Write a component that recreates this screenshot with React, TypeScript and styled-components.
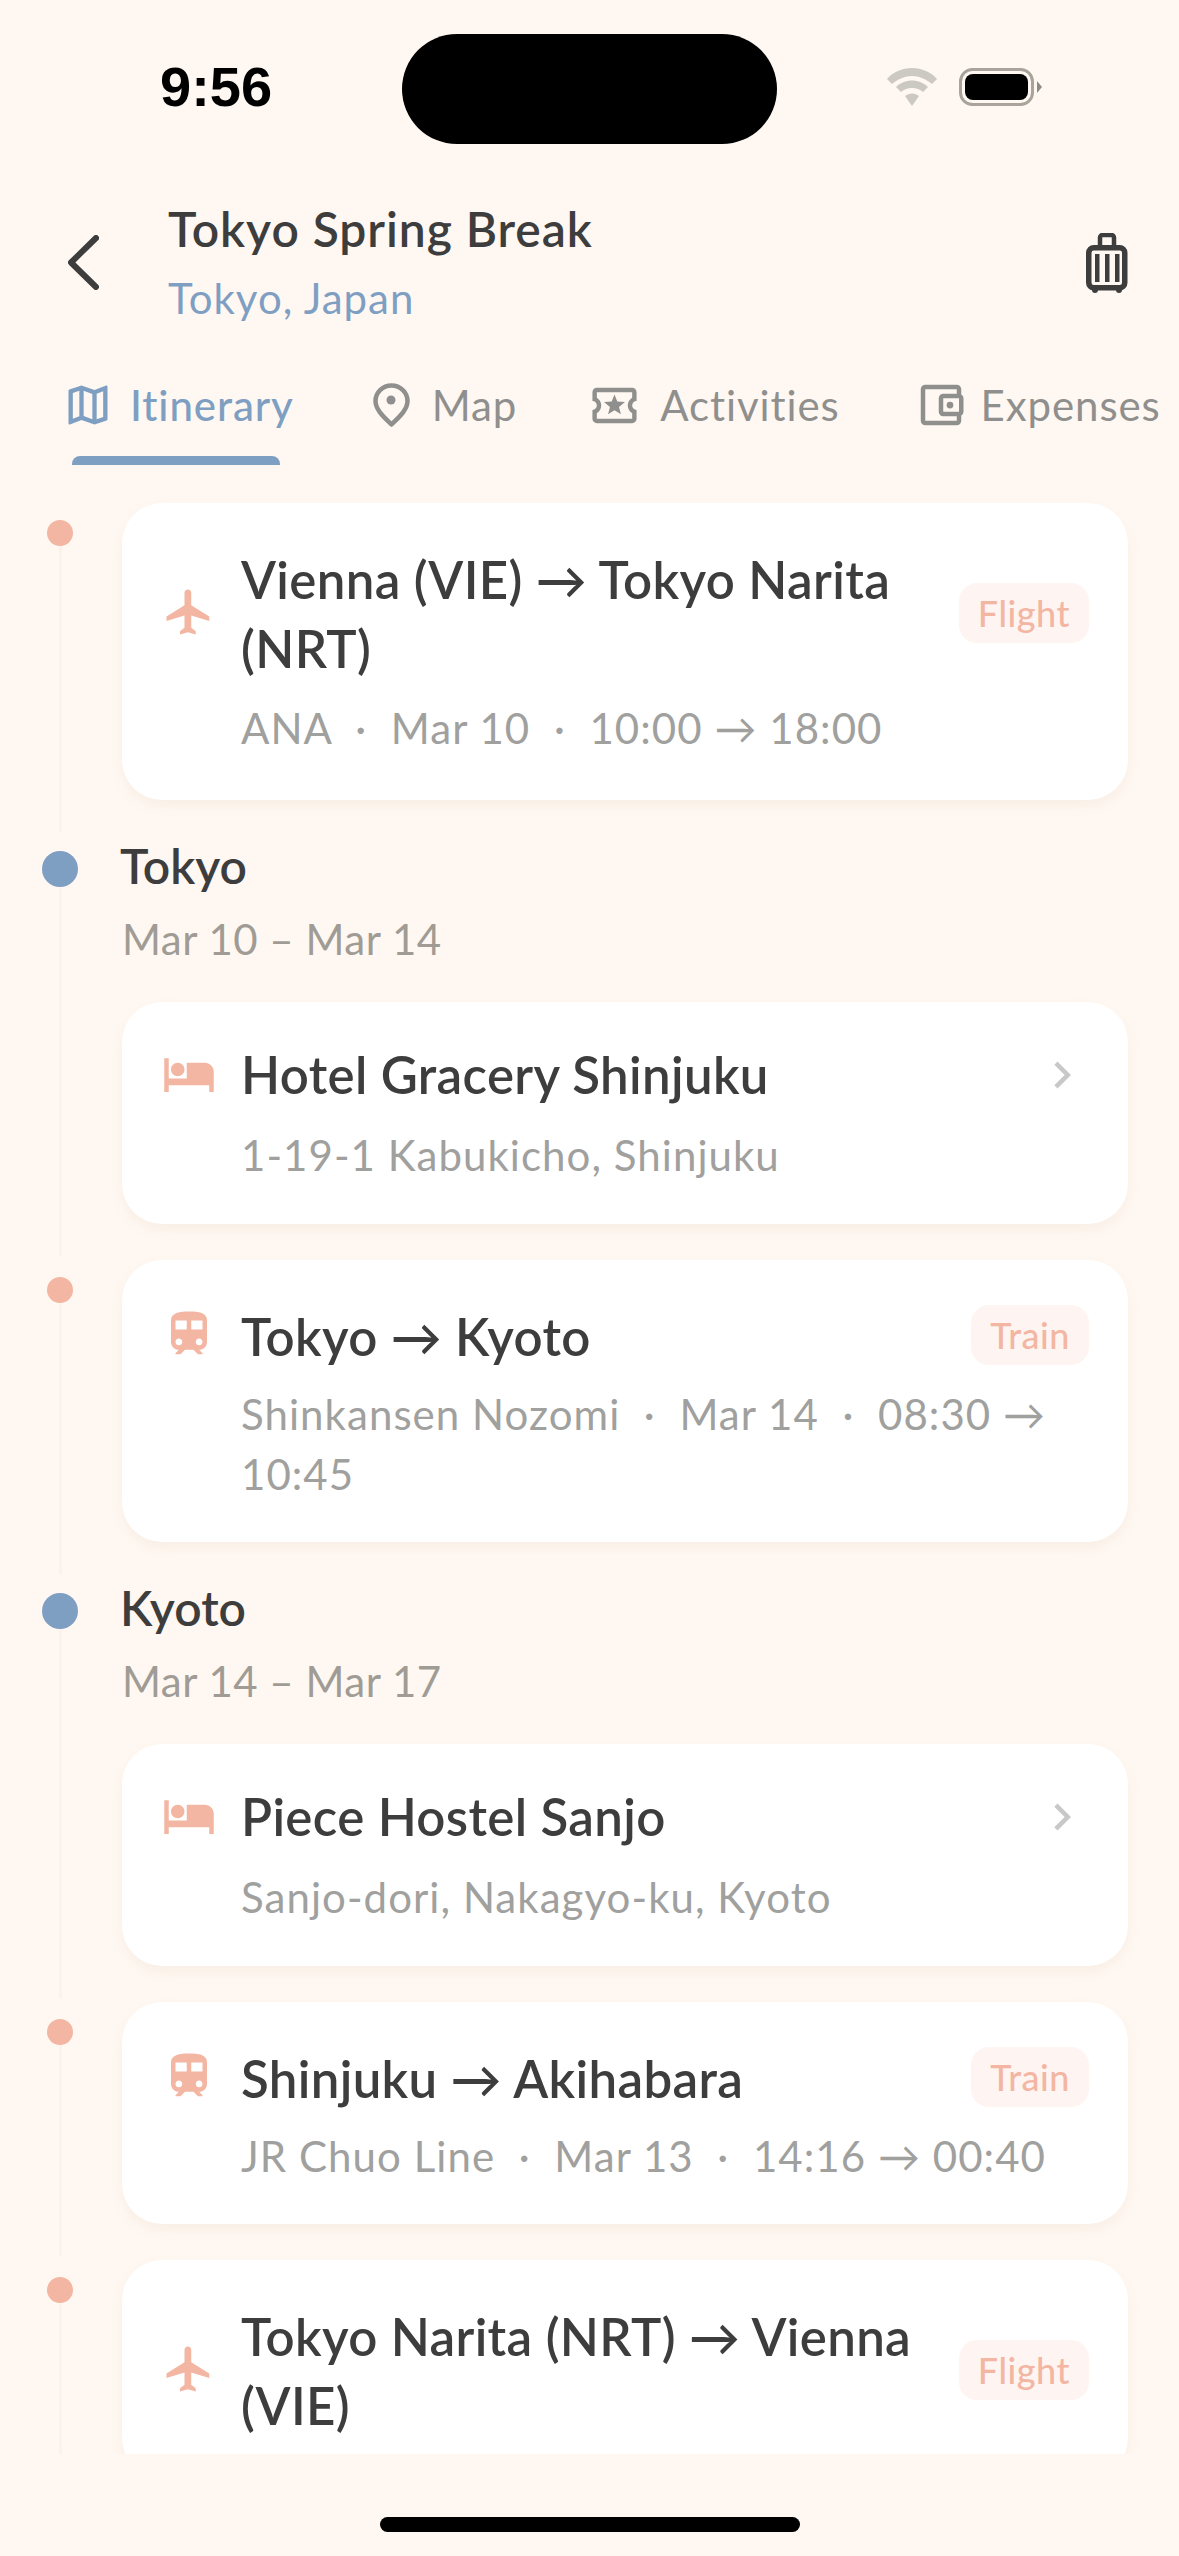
import React from "react";
import styled, { createGlobalStyle } from "styled-components";
import {
  MdFlight, MdHotel, MdTrain, MdChevronRight, MdOutlineMap,
  MdOutlineLocalActivity, MdOutlineAccountBalanceWallet,
} from "react-icons/md";

const FONT = `"Lato", "Noto Sans", sans-serif`;
const INK = "#3d3d3d";
const CORAL = "#f3b6a2";
const BLUE = "#7f9fc2";
const GREY = "#8f8f8d";

const Global = createGlobalStyle`
  html, body { margin: 0; padding: 0; background: #fff8f2; }
  body { font-family: ${FONT}; }
`;

const Screen = styled.div`
  width: 1179px; height: 2556px; display: flex; flex-direction: column;
  background: #fff8f2; overflow: hidden; color: ${INK};
`;
const StatusBar = styled.div`
  display: flex; align-items: center; padding: 34px 0 0 160px; height: 110px; flex: none;
`;
const Time = styled.div`
  width: 110px; margin-right: 132px; margin-top: -4px;
  font: 700 56px/1 "Liberation Sans", sans-serif; color: #000; white-space: nowrap;
`;
const Island = styled.div`width: 375px; height: 110px; border-radius: 55px; background: #000;`;
const StatusIcons = styled.div`
  display: flex; align-items: center; gap: 22px; margin-left: 110px; margin-top: -4px;
`;
const Header = styled.header`
  display: flex; align-items: center; padding: 53px 51px 0 68px; flex: none;
`;
const Titles = styled.div`flex: 1; margin-left: 69px;`;
const TripName = styled.div`font-size: 48px; line-height: 68px; margin-top: -2px; font-weight: 600; letter-spacing: .95px;`;
const TripPlace = styled.div`font-size: 42px; line-height: 60px; margin-top: 5px; color: ${BLUE}; letter-spacing: 1px;`;
const Tabs = styled.nav`display: flex; padding: 47px 0 0 62px; flex: none; overflow: hidden;`;
const Tab = styled.div<{ $gap: number }>`display: flex; flex-direction: column; flex: none; margin-right: ${p => p.$gap}px;`;
const TabRow = styled.div<{ $active?: boolean; $iconGap: number }>`
  display: flex; align-items: center; height: 60px; gap: ${p => p.$iconGap}px; font-size: 42px; letter-spacing: .9px;
  color: ${p => (p.$active ? BLUE : GREY)}; font-weight: ${p => (p.$active ? 500 : 400)};
`;
const Indicator = styled.div`
  height: 9px; margin: 21px 0 0 10px; width: 208px; border-radius: 8px 8px 0 0; background: ${BLUE};
`;
const Scroll = styled.main`flex: 1; min-height: 0; overflow: hidden; padding: 38px 51px 0 42px;`;
const Item = styled.div`display: flex;`;
const Rail = styled.div<{ $top: number }>`
  width: 36px; flex: none; display: flex; flex-direction: column; align-items: center; padding-top: ${p => p.$top}px;
`;
const Dot = styled.div<{ $city?: boolean }>`
  flex: none; width: ${p => (p.$city ? 36 : 26)}px; height: ${p => (p.$city ? 36 : 26)}px; border-radius: 50%;
  background: ${p => (p.$city ? BLUE : CORAL)};
`;
const RailLine = styled.div`flex: 1; width: 3px; background: #faf2ec; margin-bottom: 4px;`;
const Body = styled.div`flex: 1; min-width: 0; margin-left: 44px; padding-bottom: 36px;`;
const CityName = styled.div`font-size: 48px; line-height: 64px; font-weight: 600; margin: -2px 0 2px -2px;`;
const CityDates = styled.div`font-size: 42px; line-height: 60px; color: #a09c95; margin: 11px 0 33px; letter-spacing: .5px;`;
const Card = styled.div`
  display: grid; grid-template-columns: 54px 1fr auto; column-gap: 25px; align-items: center;
  padding: 39px 39px 38px 40px; background: #fff; border-radius: 40px;
  box-shadow: 0 6px 14px rgba(190, 160, 130, 0.10);
`;
const CardIcon = styled.div`display: flex; color: ${CORAL}; grid-column: 1; margin-bottom: 2px;`;
const CardTitle = styled.div<{ $stay?: boolean }>`
  font-size: 51px; line-height: 69px; font-weight: 600; grid-column: 2; letter-spacing: .35px;
  margin-top: ${p => (p.$stay ? -1 : 3)}px;
`;
const Badge = styled.div`
  grid-column: 3; height: 60px; line-height: 60px; padding: 0 19px; border-radius: 18px;
  background: #fef5f2; color: ${CORAL}; font-size: 36px; font-weight: 500; letter-spacing: .5px;
`;
const Chevron = styled.div`grid-column: 3; display: flex; color: #c8c8c8;`;
const Meta = styled.div<{ $stay?: boolean; $wrapped?: boolean }>`
  grid-column: 2 / 4; font-size: 42px; line-height: 60px; color: #a0a09e; letter-spacing: 1.05px;
  margin-top: ${p => (p.$stay ? 16 : p.$wrapped ? 15 : 13)}px;
  margin-bottom: ${p => (p.$stay ? 1 : p.$wrapped ? 4 : 0)}px;
`;
const Footer = styled.div`height: 102px; flex: none; display: flex; justify-content: center; padding-top: 63px; box-sizing: border-box;`;
const HomeBar = styled.div`width: 420px; height: 15px; border-radius: 8px; background: #000;`;

const Wifi = () => (
  <svg width="50" height="38" viewBox="0 0 50 38" fill="#ccc9c2">
    <path d="M0 11C6 4 15 0 25 0s19 4 25 11l-5 5C39 11 32 8 25 8S11 11 5 16z" />
    <path d="M9 19c4-4 10-6.500 16-6.500S37 15 41 19l-5 5c-3-2.500-7-4-11-4s-8 1.500-11 4z" />
    <path d="M18 28c2-1.500 4.500-2.500 7-2.500s5 1 7 2.500l-7 10z" />
  </svg>
);
const Battery = () => (
  <svg width="83" height="38" viewBox="0 0 83 38">
    <rect x="1.500" y="1.500" width="72" height="35" rx="12" fill="none" stroke="#a8a49c" strokeWidth="3" />
    <rect x="6" y="6" width="63" height="26" rx="8" fill="#000" />
    <path d="M78 13l5 6-5 6z" fill="#8e8b85" />
  </svg>
);
const BackChevron = () => (
  <svg width="31" height="55" viewBox="0 0 31 55" fill="none" stroke={INK} strokeWidth="6" strokeLinecap="round" strokeLinejoin="round">
    <path d="M28 3L3 27.500 28 52" />
  </svg>
);
const PinIcon = () => (
  <svg width="37" height="44" viewBox="0 0 37 44" fill="none" stroke={GREY} strokeWidth="4.500" strokeLinejoin="round">
    <path d="M18.500 2.500C9.500 2.500 2.500 9.500 2.500 18c0 9 9 16.500 16 23.500 7-7 16-14.500 16-23.500 0-8.500-7-15.500-16-15.500z" />
    <circle cx="18" cy="17" r="4.500" fill={GREY} stroke="none" />
  </svg>
);
const Suitcase = () => (
  <svg width="42" height="60" viewBox="0 0 42 60" fill="none" stroke={INK}>
    <path d="M14 14V4.500a2.500 2.500 0 012.500-2.500h9a2.500 2.500 0 012.500 2.500V14" strokeWidth="4.500" />
    <rect x="2.750" y="14.750" width="36" height="40" rx="5" strokeWidth="5.500" />
    <g fill={INK} stroke="none">
      <rect x="9" y="21" width="4.500" height="28" />
      <rect x="19" y="21" width="4.500" height="28" />
      <rect x="29" y="21" width="4.500" height="28" />
      <circle cx="9" cy="57" r="3" />
      <circle cx="33" cy="57" r="3" />
    </g>
  </svg>
);

const TAB_DATA = [
  { label: "Itinerary", icon: <MdOutlineMap size={52} />, gap: 79, iconGap: 16, active: true },
  { label: "Map", icon: <PinIcon />, gap: 71, iconGap: 22 },
  { label: "Activities", icon: <MdOutlineLocalActivity size={53} />, gap: 74, iconGap: 19 },
  { label: "Expenses", icon: <MdOutlineAccountBalanceWallet size={54} />, gap: 0, iconGap: 13 },
];

const SEP = "\u00A0\u00A0·\u00A0\u00A0";
type Entry =
  | { kind: "transit"; mode: "Flight" | "Train"; title: string; meta?: string; wrapped?: boolean }
  | { kind: "city"; name: string; dates: string; hotel: string; address: string };
const ENTRIES: Entry[] = [
  { kind: "transit", mode: "Flight", title: "Vienna (VIE) → Tokyo Narita (NRT)", meta: `ANA${SEP}Mar 10${SEP}10:00 → 18:00`, wrapped: true },
  { kind: "city", name: "Tokyo", dates: "Mar 10 – Mar 14", hotel: "Hotel Gracery Shinjuku", address: "1-19-1 Kabukicho, Shinjuku" },
  { kind: "transit", mode: "Train", title: "Tokyo → Kyoto", meta: `Shinkansen Nozomi${SEP}Mar 14${SEP}08:30 → 10:45` },
  { kind: "city", name: "Kyoto", dates: "Mar 14 – Mar 17", hotel: "Piece Hostel Sanjo", address: "Sanjo-dori, Nakagyo-ku, Kyoto" },
  { kind: "transit", mode: "Train", title: "Shinjuku → Akihabara", meta: `JR Chuo Line${SEP}Mar 13${SEP}14:16 → 00:40` },
  { kind: "transit", mode: "Flight", title: "Tokyo Narita (NRT) → Vienna (VIE)", wrapped: true },
];

export default function App() {
  return (
    <Screen>
      <Global />
      <StatusBar>
        <Time>9:56</Time>
        <Island />
        <StatusIcons><Wifi /><Battery /></StatusIcons>
      </StatusBar>
      <Header>
        <BackChevron />
        <Titles>
          <TripName>Tokyo Spring Break</TripName>
          <TripPlace>Tokyo, Japan</TripPlace>
        </Titles>
        <Suitcase />
      </Header>
      <Tabs>
        {TAB_DATA.map(t => (
          <Tab key={t.label} $gap={t.gap}>
            <TabRow $active={t.active} $iconGap={t.iconGap}>{t.icon}{t.label}</TabRow>
            {t.active && <Indicator />}
          </Tab>
        ))}
      </Tabs>
      <Scroll>
        {ENTRIES.map((e, i) =>
          e.kind === "transit" ? (
            <Item key={i}>
              <Rail $top={17}><Dot /><RailLine /></Rail>
              <Body>
                <Card>
                  <CardIcon>{e.mode === "Flight" ? <MdFlight size={54} /> : <MdTrain size={54} />}</CardIcon>
                  <CardTitle>{e.title}</CardTitle>
                  <Badge>{e.mode}</Badge>
                  {e.meta && <Meta $wrapped={e.wrapped}>{e.meta}</Meta>}
                </Card>
              </Body>
            </Item>
          ) : (
            <Item key={i}>
              <Rail $top={15}><Dot $city /><RailLine /></Rail>
              <Body>
                <CityName>{e.name}</CityName>
                <CityDates>{e.dates}</CityDates>
                <Card>
                  <CardIcon><MdHotel size={54} /></CardIcon>
                  <CardTitle $stay>{e.hotel}</CardTitle>
                  <Chevron><MdChevronRight size={54} /></Chevron>
                  <Meta $stay>{e.address}</Meta>
                </Card>
              </Body>
            </Item>
          )
        )}
      </Scroll>
      <Footer><HomeBar /></Footer>
    </Screen>
  );
}
